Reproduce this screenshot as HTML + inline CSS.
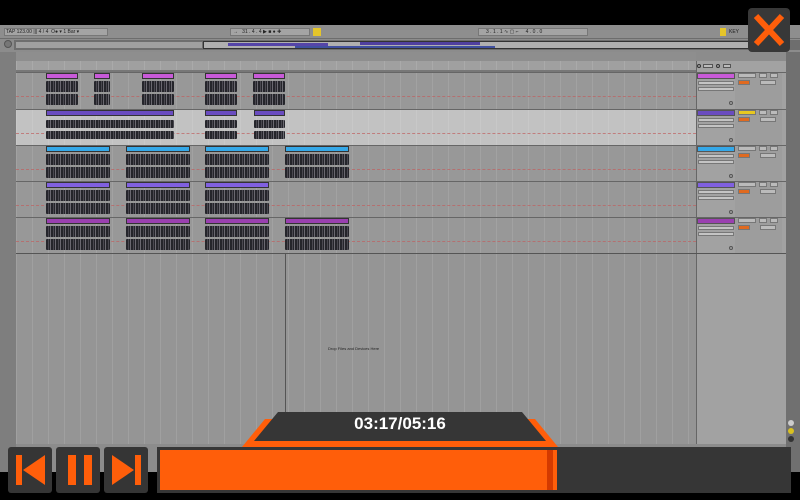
<!DOCTYPE html>
<html><head><meta charset="utf-8"><style>
*{margin:0;padding:0;box-sizing:border-box}
body{width:800px;height:500px;background:#000;position:relative;overflow:hidden;font-family:"Liberation Sans",sans-serif}
.a{position:absolute}
.grid{background-color:#989898;background-image:repeating-linear-gradient(90deg,rgba(255,255,255,.1) 0 1px,transparent 1px 16px)}
.wave{background:repeating-linear-gradient(90deg,#25252b 0 2px,#4a4850 2px 3px,#25252b 3px 4px,#6a6870 4px 5px);border-radius:1px}
.tb{font-size:5px;color:#222}
</style></head><body>
<div class="a" style="left:0;top:25px;width:800px;height:447px;background:#8c8c8c"></div>
<div class="a" style="left:0;top:25px;width:800px;height:14px;background:#8e8e8e;border-bottom:1px solid #6d6d6d"></div>
<div class="a" style="left:4px;top:28px;width:104px;height:8px;background:#a4a4a4;border:1px solid #777"></div>
<div class="a tb" style="left:6px;top:29px">TAP 123.00 ||| 4 / 4 &nbsp;O● ▾ 1 Bar ▾</div>
<div class="a" style="left:230px;top:28px;width:80px;height:8px;background:#a4a4a4;border:1px solid #777"></div>
<div class="a tb" style="left:233px;top:29px">→ &nbsp; 31 . 4 . 4 ▶ ■ ● ✚</div>
<div class="a" style="left:313px;top:28px;width:8px;height:8px;background:#e5c52a"></div>
<div class="a" style="left:478px;top:28px;width:110px;height:8px;background:#a4a4a4;border:1px solid #777"></div>
<div class="a tb" style="left:486px;top:29px">3 . 1 . 1 ∿ ▢ ⌐ &nbsp;&nbsp;&nbsp; 4 . 0 . 0</div>
<div class="a" style="left:720px;top:28px;width:6px;height:8px;background:#e5c52a"></div>
<div class="a tb" style="left:729px;top:29px">KEY</div>
<div class="a" style="left:14px;top:40px;width:786px;height:10px;background:#6e6e6e"></div>
<div class="a" style="left:16px;top:42px;width:186px;height:6px;background:#a0a0a0"></div>
<div class="a" style="left:203px;top:41px;width:580px;height:8px;background:#b0b0b0;border:1px solid #333"></div>
<div class="a" style="left:228px;top:43px;width:100px;height:3px;background:#5545a8"></div>
<div class="a" style="left:295px;top:46px;width:200px;height:2px;background:#4050a0"></div>
<div class="a" style="left:360px;top:42px;width:120px;height:3px;background:#5040a0"></div>
<div class="a" style="left:4px;top:40px;width:8px;height:8px;border-radius:50%;background:#777;border:1px solid #555"></div>
<div class="a" style="left:16px;top:52px;width:680px;height:9px;background:#8e8e8e"></div>
<div class="a grid" style="left:16px;top:61px;width:680px;height:10px;background-color:#a0a0a0"></div>
<div class="a" style="left:16px;top:70px;width:680px;height:2px;background:#777"></div>
<div class="a" style="left:0;top:52px;width:16px;height:420px;background:#7e7e7e"></div>
<div class="a grid" style="left:16px;top:72px;width:680px;height:37px"></div>
<div class="a grid" style="left:16px;top:109px;width:680px;height:36px;background-color:#c2c2c2"></div>
<div class="a grid" style="left:16px;top:145px;width:680px;height:36px"></div>
<div class="a grid" style="left:16px;top:181px;width:680px;height:36px"></div>
<div class="a grid" style="left:16px;top:217px;width:680px;height:36px"></div>
<div class="a grid" style="left:16px;top:254px;width:680px;height:190px;background-color:#959595"></div>
<div id="tr"></div>
<div class="a" style="left:285px;top:254px;width:1px;height:190px;background:#555"></div>
<div class="a" style="left:328px;top:346px;font-size:4px;color:#222">Drop Files and Devices Here</div>
<div class="a" style="left:696px;top:61px;width:90px;height:383px;background:#a2a2a2;border-left:1px solid #666"></div>
<div class="a" style="left:735px;top:72px;width:47px;height:182px;background:#9d9d9d"></div>
<div id="rp"></div>
<div class="a" style="left:786px;top:52px;width:14px;height:420px;background:#707070"></div>
<div class="a" style="left:788px;top:420px;width:6px;height:6px;border-radius:50%;background:#ccc"></div>
<div class="a" style="left:788px;top:428px;width:6px;height:6px;border-radius:50%;background:#d8c020"></div>
<div class="a" style="left:788px;top:436px;width:6px;height:6px;border-radius:50%;background:#333"></div>
<div class="a" style="left:0;top:472px;width:800px;height:28px;background:#000"></div>
<svg class="a" style="left:240px;top:410px" width="320" height="40">
<polygon points="25,9 295,9 318,37 2,37" fill="#ff5e0a"/>
<polygon points="38,2 282,2 306,31 14,31" fill="#363636"/>
<polygon points="95,31 225,31 230,26 90,26" fill="#363636"/>
</svg>
<div class="a" style="left:248px;top:414px;width:304px;text-align:center;color:#fff;font-size:17px;font-weight:bold">03:17/05:16</div>
<div class="a" style="left:8px;top:447px;width:44px;height:46px;background:#353535;border-radius:3px"></div>
<div class="a" style="left:56px;top:447px;width:44px;height:46px;background:#353535;border-radius:3px"></div>
<div class="a" style="left:104px;top:447px;width:44px;height:46px;background:#353535;border-radius:3px"></div>
<svg class="a" style="left:8px;top:447px" width="140" height="46">
<rect x="8" y="8" width="6" height="30" fill="#ff5e0a"/><polygon points="15,23 37,8 37,38" fill="#ff5e0a"/>
<rect x="60" y="8" width="8" height="30" fill="#ff5e0a"/><rect x="76" y="8" width="8" height="30" fill="#ff5e0a"/>
<polygon points="104,8 126,23 104,38" fill="#ff5e0a"/><rect x="127" y="8" width="6" height="30" fill="#ff5e0a"/>
</svg>
<div class="a" style="left:157px;top:447px;width:634px;height:46px;background:#363636"></div>
<div class="a" style="left:160px;top:450px;width:397px;height:40px;background:#ff5e0a"></div>
<div class="a" style="left:547px;top:450px;width:6px;height:40px;background:#d43a00"></div>
<div class="a" style="left:748px;top:8px;width:42px;height:44px;background:#383838;border-radius:4px"></div>
<svg class="a" style="left:748px;top:8px" width="42" height="44"><path d="M8 8 L34 36 M34 8 L8 36" stroke="#ff5e0a" stroke-width="6"/></svg>
<script>
var h='';
function d(x,y,w,hh,s,c){h+='<div class="a '+(c||'')+'" style="left:'+x+'px;top:'+y+'px;width:'+w+'px;height:'+hh+'px;'+s+'"></div>';}
var T=[[72,'#c85ad8',[[46,32],[94,16],[142,32],[205,32],[253,32]]],
[109,'#6a4cc0',[[46,128],[205,32],[254,31]]],
[145,'#35a8e8',[[46,64],[126,64],[205,64],[285,64]]],
[181,'#8060e0',[[46,64],[126,64],[205,64]]],
[217,'#9a40b0',[[46,64],[126,64],[205,64],[285,64]]]];
T.forEach(function(t){var y=t[0];
d(16,y,680,1,'background:#666');
d(16,y+24,680,1,'border-top:1px dashed #c06060;opacity:.7');
t[2].forEach(function(c){d(c[0],y+1,c[1],6,'background:'+t[1]+';border:1px solid #333');
var sm=(y==109);
d(c[0],y+(sm?11:9),c[1],sm?8:11,'','wave');
d(c[0],y+(sm?22:22),c[1],sm?8:11,'','wave');});});
d(16,253,680,1,'background:#555');
document.getElementById('tr').innerHTML=h;
h='';
T.forEach(function(t){var y=t[0];
d(696,y,90,1,'background:#666');
d(697,y+1,38,6,'background:'+t[1]+';border:1px solid #555');
d(698,y+9,36,4,'background:#c4c4c4;border:1px solid #777');
d(698,y+15,36,4,'background:#c4c4c4;border:1px solid #777');
d(738,y+1,18,5,'background:'+(y==109?'#e8c820':'#bbb')+';border:1px solid #777');
d(759,y+1,8,5,'background:#bbb;border:1px solid #777');
d(770,y+1,8,5,'background:#bbb;border:1px solid #777');
d(738,y+8,12,5,'background:#e06a20;border:1px solid #777');
d(760,y+8,16,5,'background:#bbb;border:1px solid #777');
d(729,y+29,4,4,'border-radius:50%;border:1px solid #555');});
d(696,253,90,1,'background:#555');
d(697,64,4,4,'border-radius:50%;border:1px solid #333');
d(703,64,10,4,'background:#bbb;border:1px solid #555');
d(716,64,4,4,'border-radius:50%;border:1px solid #333');
d(723,64,8,4,'background:#bbb;border:1px solid #555');
document.getElementById('rp').innerHTML=h;
</script>
</body></html>
